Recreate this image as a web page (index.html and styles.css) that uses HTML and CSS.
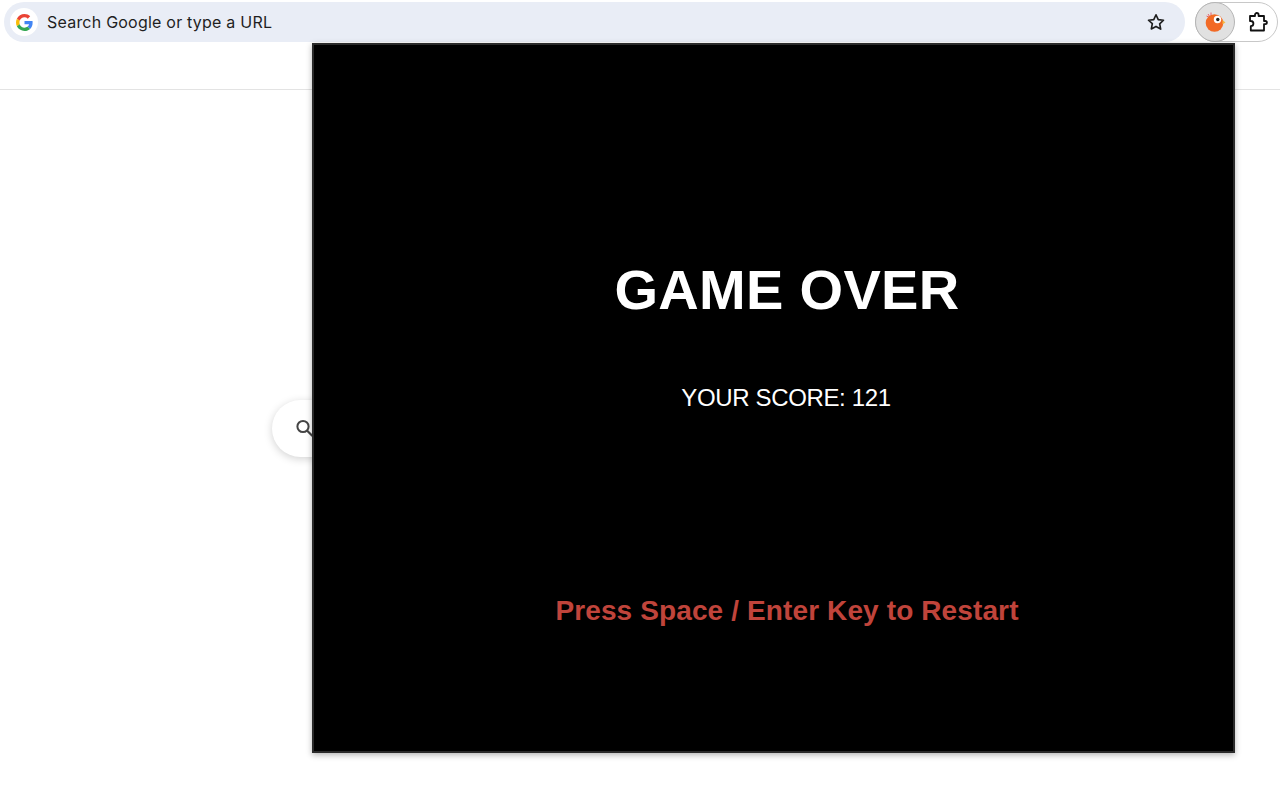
FILE: index.html
```html
<!DOCTYPE html>
<html lang="en">
<head>
<meta charset="utf-8">
<title>Game Over</title>
<link rel="stylesheet" href="styles.css">
</head>
<body>
<header class="toolbar">
  <div class="omnibox">
    <span class="g-badge">
      <svg width="17" height="17" viewBox="0 0 48 48">
        <path fill="#EA4335" d="M24 9.500c3.500 0 6.700 1.200 9.200 3.600l6.900-6.900C35.900 2.400 30.500 0 24 0 14.600 0 6.500 5.400 2.600 13.200l8 6.200C12.400 13.700 17.700 9.500 24 9.500z"/>
        <path fill="#4285F4" d="M46.900 24.500c0-1.600-.1-3.100-.4-4.500H24v9h12.900c-.6 3-2.200 5.500-4.800 7.200l7.700 6c4.500-4.200 7.100-10.300 7.100-17.700z"/>
        <path fill="#FBBC05" d="M10.500 28.600c-.5-1.400-.8-3-.8-4.600s.3-3.200.8-4.600l-8-6.200C.9 16.500 0 20.100 0 24s.9 7.500 2.600 10.800l7.900-6.200z"/>
        <path fill="#34A853" d="M24 48c6.500 0 11.900-2.100 15.900-5.800l-7.700-6c-2.200 1.400-4.900 2.300-8.200 2.300-6.300 0-11.600-4.200-13.500-9.900l-8 6.200C6.500 42.600 14.600 48 24 48z"/>
      </svg>
    </span>
    <span class="omni-text">Search Google or type a URL</span>
    <svg class="star" width="20" height="20" viewBox="0 0 24 24">
      <path fill="none" stroke="#1f1f1f" stroke-width="2" stroke-linejoin="round" d="M12 3.300l2.700 5.800 6.300.8-4.600 4.300 1.200 6.300L12 17.300l-5.600 3 1.200-6.300L3 9.900l6.300-.8z"/>
    </svg>
  </div>
  <div class="ext-pill">
    <span class="ext-active">
      <svg width="22" height="22" viewBox="0 0 22 22">
        <path fill="none" stroke="#e8606a" stroke-width="1" d="M4 3l2 3M7 1.500l0 4M2.500 5l3 1.500"/>
        <circle cx="10.500" cy="12" r="8.800" fill="#f26a25"/>
        <path fill="#f5b840" d="M18.500 9l3 2.500-3 1.800z"/>
        <circle cx="13.500" cy="8.500" r="3.700" fill="#fff"/>
        <circle cx="13.800" cy="8.500" r="1.700" fill="#222"/>
      </svg>
    </span>
    <span class="ext-puzzle">
      <svg width="22" height="22" viewBox="0 0 22 22">
        <path fill="none" stroke="#111" stroke-width="1.800" stroke-linejoin="round" d="M3 5h5V3.800a1.800 1.800 0 0 1 3.600 0V5h5.400v5h1.300a1.600 1.600 0 0 1 0 3.200H17V19.500H3.800v-4.300a2.600 2.600 0 0 0 0-5.200H3z"/>
      </svg>
    </span>
  </div>
</header>
<main class="page">
  <div class="ntp-search">
    <svg width="20" height="20" viewBox="0 0 20 20">
      <circle cx="8" cy="7.500" r="5.600" fill="none" stroke="#444" stroke-width="2"/>
      <path stroke="#444" stroke-width="2.200" d="M12 11.500l5.500 5.500"/>
    </svg>
  </div>
</main>
<section class="popup">
  <h1 class="title">GAME OVER</h1>
  <p class="score">YOUR SCORE: 121</p>
  <p class="restart">Press Space / Enter Key to Restart</p>
</section>
</body>
</html>
```

FILE: styles.css
```css
* { box-sizing: border-box; }
html, body { margin: 0; height: 100%; }
body {
  width: 1280px;
  height: 800px;
  overflow: hidden;
  background: #fff;
  font-family: "Liberation Sans", Arial, sans-serif;
}
.toolbar {
  height: 90px;
  padding: 2px 2px 0 4px;
  display: flex;
  align-items: flex-start;
  gap: 10px;
  border-bottom: 1px solid #e3e3e3;
}
.omnibox {
  flex: 1;
  height: 40px;
  border-radius: 20px;
  background: #e9edf6;
  display: flex;
  align-items: center;
  padding: 0 19px 0 6px;
}
.g-badge {
  width: 28px;
  height: 28px;
  border-radius: 50%;
  background: #fff;
  display: flex;
  align-items: center;
  justify-content: center;
}
.omni-text {
  flex: 1;
  margin-left: 9px;
  font-family: Inter, "Liberation Sans", sans-serif;
  font-size: 16px;
  letter-spacing: 0.22px;
  color: #1f1f1f;
}
.ext-pill {
  width: 83px;
  height: 40px;
  border: 1px solid #c8c8c8;
  border-radius: 20px;
  display: flex;
  align-items: center;
}
.ext-active {
  width: 40px;
  height: 40px;
  margin: -1px 0 -1px -1px;
  border-radius: 50%;
  background: #e1e1e1;
  border: 1px solid #b5b5b5;
  display: flex;
  align-items: center;
  justify-content: center;
}
.ext-puzzle {
  flex: 1;
  display: flex;
  justify-content: center;
  padding-left: 3px;
}
.page {
  padding: 310px 0 0 272px;
}
.ntp-search {
  width: 600px;
  height: 57px;
  border-radius: 29px;
  background: #fff;
  box-shadow: 0 2px 8px rgba(0, 0, 0, 0.18);
  display: flex;
  align-items: center;
  padding-left: 23px;
}
.popup {
  position: absolute;
  left: 312px;
  top: 43px;
  width: 923px;
  height: 710px;
  background: #000;
  border: 2px solid #2a2a2a;
  box-shadow: 0 2px 6px rgba(0, 0, 0, 0.3);
  color: #fff;
  text-align: center;
  padding: 215px 0 0 0;
  display: flex;
  flex-direction: column;
  align-items: center;
}
.title, .score, .restart { margin: 0; padding-left: 27px; white-space: nowrap; }
.title { font-size: 56px; line-height: 60px; font-weight: 700; letter-spacing: 0.3px; }
.score { margin-top: 63px; padding-left: 25px; font-size: 24px; line-height: 30px; letter-spacing: -0.35px; }
.restart { margin-top: 182px; font-size: 28px; line-height: 32px; font-weight: 700; letter-spacing: 0.12px; color: #c0443b; }
```
